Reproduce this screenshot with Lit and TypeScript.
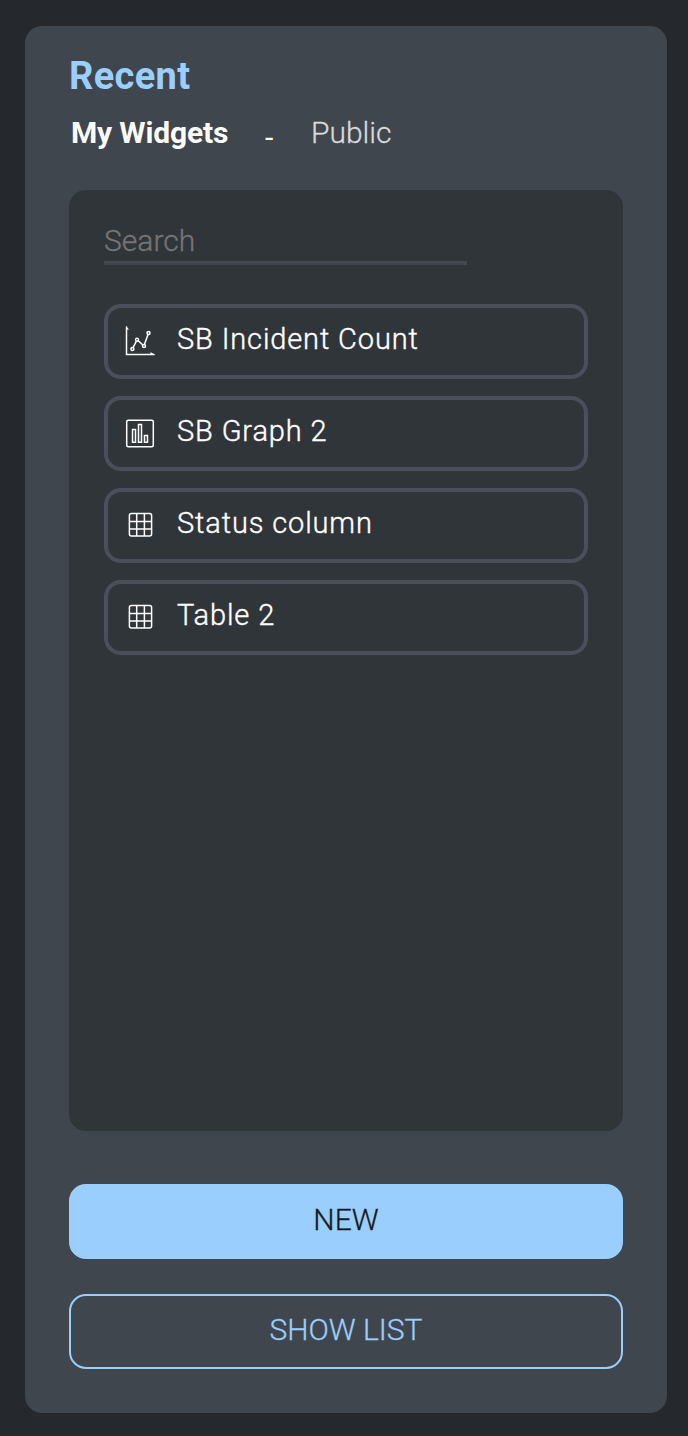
import { LitElement, html, css, svg } from "lit";
import { customElement } from "lit/decorators.js";

const icons: Record<string, unknown> = {
  line: svg`<path d="M2.500 1.500V29.500H30.500"/><path class="solid" d="M2 1l3 3.500H2zM31 30l-4.500-3V30z"/><circle cx="8.400" cy="24" r="1.500"/><circle cx="13" cy="14.800" r="1.500"/><circle cx="20" cy="21" r="1.500"/><circle cx="24.500" cy="8" r="1.500"/><path d="M9 22.600l3.300-6.300M14.200 15.800l4.700 4.200M20.400 19.500l3.600-10"/>`,
  bar: svg`<rect x="2.700" y="3.200" width="26.600" height="26.600" rx="1.500"/><path d="M8.500 12.500h3v12.700h-3zM14.500 7.500h3v17.700h-3zM20.500 18.500h3v6.700h-3z"/>`,
  table: svg`<rect x="5.400" y="4.600" width="22.200" height="22.500" rx="2"/><path d="M12.700 4.600v22.500M20.400 4.600v22.500M5.400 12.500h22.200M5.400 20h22.200"/>`,
};

const widgets = [
  { icon: "line", name: "SB Incident Count" },
  { icon: "bar", name: "SB Graph 2" },
  { icon: "table", name: "Status column" },
  { icon: "table", name: "Table 2" },
];

@customElement("app-root")
export class AppRoot extends LitElement {
  static styles = css`
    :host { display: block; box-sizing: border-box; height: 1436px; padding: 26px 21px 23px 25px; background: #25282d; font-family: Roboto, sans-serif; color: #fff; }
    * { box-sizing: border-box; }
    .card { height: 1387px; background: #40464d; border-radius: 17px; padding: 28px 44px 0; display: flex; flex-direction: column; }
    h1 { margin: 0; font-size: 38px; line-height: 44px; font-weight: 700; letter-spacing: .35px; color: #9acffd; }
    .tabs { display: flex; height: 36px; margin-top: 17px; padding-left: 2px; font-size: 30px; line-height: 36px; font-weight: 300; }
    .active { font-weight: 700; width: 194px; letter-spacing: -.15px; }
    .dash { width: 46px; font-weight: 400; padding-top: 5px; }
    .public { color: #d8dadc; -webkit-text-stroke: .3px; }
    .panel { height: 941px; margin-top: 39px; background: #303539; border-radius: 17px; padding: 32px 35px; }
    .search { width: 363px; height: 43px; border-bottom: 4px solid #434750; color: #757575; font-size: 30px; font-weight: 300; line-height: 37px; -webkit-text-stroke: .3px; }
    .list { display: flex; flex-direction: column; gap: 17px; margin-top: 39px; }
    .item { height: 75px; border: 4px solid #4b4f5b; border-radius: 17px; display: flex; padding: 0 16px; font-size: 29px; font-weight: 300; line-height: 62px; letter-spacing: .87px; -webkit-text-stroke: .4px; }
    svg { width: 32px; height: 32px; margin: 17px 21px 0 0; fill: none; stroke: #fff; stroke-width: 1.500; }
    .solid { fill: #fff; stroke: none; }
    .button { height: 75px; border: 2px solid #9acffd; border-radius: 17px; text-align: center; font-size: 30px; font-weight: 300; line-height: 67px; color: #9acffd; margin-top: 35px; -webkit-text-stroke: .3px; }
    .primary { margin-top: 53px; background: #9acffd; color: #17191b; }
  `;
  render() {
    return html`<main class="card"><h1>Recent</h1>
      <nav class="tabs"><span class="active">My Widgets</span><span class="dash">-</span><span class="public">Public</span></nav>
      <section class="panel"><div class="search">Search</div><div class="list">
      ${widgets.map((w) => html`<div class="item"><svg viewBox="0 0 32 32">${icons[w.icon]}</svg><span>${w.name}</span></div>`)}
      </div></section><div class="button primary">NEW</div><div class="button">SHOW LIST</div></main>`;
  }
}
